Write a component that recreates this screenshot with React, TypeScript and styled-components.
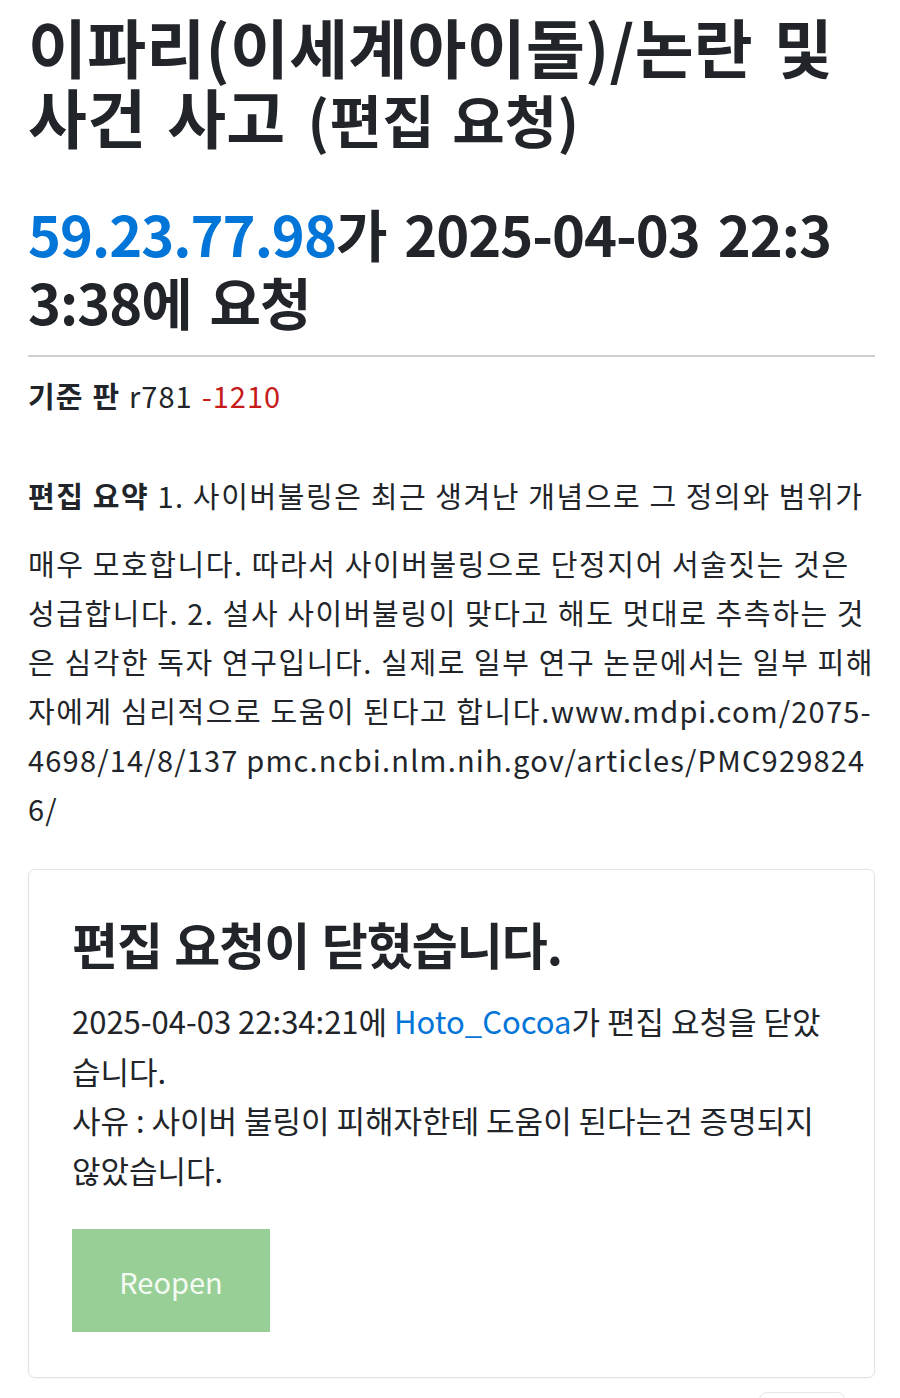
import React from "react"
import styled, { createGlobalStyle } from "styled-components"

const GlobalStyle = createGlobalStyle`
    html, body {
        margin: 0;
        padding: 0;
        background: #ffffff;
    }
    body {
        font-family: "Noto Sans CJK KR", "Noto Sans", sans-serif;
        color: #212529;
        word-break: break-all;
    }
`

const EditRequest = () => {
    return (
        <Page>
            <GlobalStyle />
            <Title>
                이파리(이세계아이돌)/논란 및 사건 사고
                <TitleSmall>(편집 요청)</TitleSmall>
            </Title>
            <SubTitle>
                <Link>59.23.77.98</Link>가 2025-04-03 22:33:38에 요청
            </SubTitle>
            <Divider />
            <InfoLine>
                <Label>기준 판</Label> r781 <Diff>-1210</Diff>
            </InfoLine>
            <Summary>
                <SummaryLabel>편집 요약</SummaryLabel> 1. 사이버불링은 최근 생겨난 개념으로 그 정의와 범위가 매우 모호합니다. 따라서 사이버불링으로 단정지어 서술짓는 것은 성급합니다. 2. 설사 사이버불링이 맞다고 해도 멋대로 추측하는 것은 심각한 독자 연구입니다. 실제로 일부 연구 논문에서는 일부 피해자에게 심리적으로 도움이 된다고 합니다.
                <Url>www.mdpi.com/2075-4698/14/8/137 pmc.ncbi.nlm.nih.gov/articles/PMC9298246/</Url>
            </Summary>
            <Card>
                <CardTitle>편집 요청이 닫혔습니다.</CardTitle>
                <CardText>
                    2025-04-03 22:34:21에 <Link>Hoto_Cocoa</Link>가 편집 요청을 닫았습니다.
                    <br />
                    사유 : 사이버 불링이 피해자한테 도움이 된다는건 증명되지 않았습니다.
                </CardText>
                <ReopenButton>Reopen</ReopenButton>
            </Card>
            <Footer>
                <FooterBox />
            </Footer>
        </Page>
    )
}

const Page = styled.div`
    width: 900px;
    height: 1398px;
    overflow: hidden;
    box-sizing: border-box;
    padding: 10px 25px 0 28px;
`
const Title = styled.h1`
    margin: 0;
    font-size: 64px;
    font-weight: 700;
    line-height: 70px;
    letter-spacing: 0.3px;
    word-spacing: 6px;
    color: #212529;
`
const TitleSmall = styled.small`
    margin-left: 22px;
    font-size: 57px;
    font-weight: 700;
    word-spacing: 4px;
`
const SubTitle = styled.h2`
    margin: 46px 0 0 0;
    padding-right: 25px;
    font-size: 56px;
    font-weight: 700;
    line-height: 68px;
    letter-spacing: -1px;
    word-spacing: 6px;
    color: #212529;
`
const Link = styled.a`
    color: #0275d8;
    text-decoration: none;
`
const Divider = styled.hr`
    margin: 20px 0 0 0;
    border: none;
    border-top: 2px solid #d0d0d0;
`
const InfoLine = styled.div`
    margin-top: 14px;
    font-size: 29px;
    line-height: 49px;
    letter-spacing: 1px;
    word-spacing: 1.5px;
`
const Label = styled.strong`
    font-weight: 700;
`
const Diff = styled.span`
    color: #c71a1a;
`
const Summary = styled.p`
    margin: 51px 0 0 0;
    font-size: 29px;
    line-height: 49px;
    letter-spacing: 1.6px;
    word-spacing: 0;
`
const SummaryLabel = styled.strong`
    display: inline-block;
    padding-bottom: 19px;
    font-weight: 700;
`
const Url = styled.span`
    letter-spacing: 1.2px;
`
const Card = styled.div`
    margin-top: 36px;
    padding: 45px 40px 45px 43px;
    border: 1px solid #e2e2e2;
    border-radius: 7px;
    box-shadow: 0 1px 2px rgba(0, 0, 0, 0.04);
`
const CardTitle = styled.h3`
    margin: 0;
    font-size: 50px;
    font-weight: 700;
    line-height: 56px;
    letter-spacing: -1px;
    word-spacing: 2px;
`
const CardText = styled.p`
    margin: 25px 0 0 0;
    font-size: 31px;
    line-height: 49.5px;
`
const ReopenButton = styled.button`
    display: block;
    margin-top: 35px;
    width: 198px;
    height: 103px;
    border: none;
    border-radius: 0;
    background-color: #98cf96;
    color: #f4fbf3;
    font-family: "Noto Sans CJK KR", "Noto Sans", sans-serif;
    font-size: 29px;
`
const Footer = styled.div`
    display: flex;
    justify-content: flex-end;
    padding: 14px 30px 0 0;
`
const FooterBox = styled.div`
    width: 84px;
    height: 40px;
    border: 1px solid #e6e6e6;
    border-radius: 8px;
`

export default EditRequest
